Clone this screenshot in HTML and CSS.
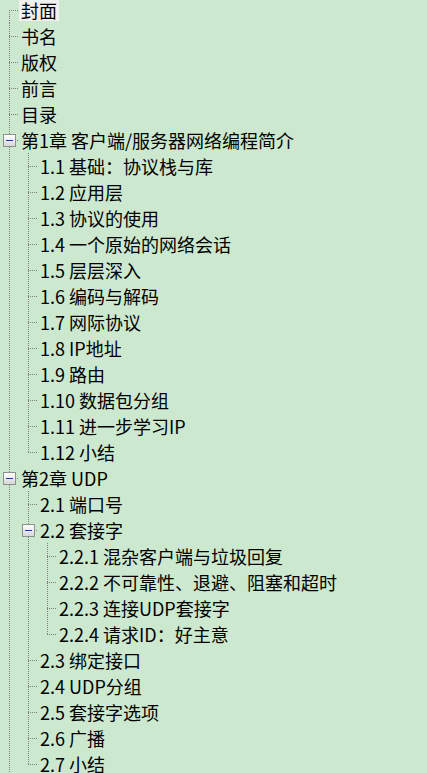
FILE: index.html
```html
<!DOCTYPE html>
<html lang="zh-CN">
<head>
<meta charset="utf-8">
<title>目录树</title>
<link rel="stylesheet" href="styles.css">
</head>
<body>
<div class="tree">
  <div class="row"><span class="c f"></span><span class="lab sel">封面</span></div>
  <div class="row"><span class="c t"></span><span class="lab">书名</span></div>
  <div class="row"><span class="c t"></span><span class="lab">版权</span></div>
  <div class="row"><span class="c t"></span><span class="lab">前言</span></div>
  <div class="row"><span class="c t"></span><span class="lab">目录</span></div>
  <div class="row"><span class="c t"><span class="box"></span></span><span class="lab">第1章 客户端/服务器网络编程简介</span></div>
  <div class="row"><span class="c v"></span><span class="c t"></span><span class="lab">1.1 基础：协议栈与库</span></div>
  <div class="row"><span class="c v"></span><span class="c t"></span><span class="lab">1.2 应用层</span></div>
  <div class="row"><span class="c v"></span><span class="c t"></span><span class="lab">1.3 协议的使用</span></div>
  <div class="row"><span class="c v"></span><span class="c t"></span><span class="lab">1.4 一个原始的网络会话</span></div>
  <div class="row"><span class="c v"></span><span class="c t"></span><span class="lab">1.5 层层深入</span></div>
  <div class="row"><span class="c v"></span><span class="c t"></span><span class="lab">1.6 编码与解码</span></div>
  <div class="row"><span class="c v"></span><span class="c t"></span><span class="lab">1.7 网际协议</span></div>
  <div class="row"><span class="c v"></span><span class="c t"></span><span class="lab">1.8 IP地址</span></div>
  <div class="row"><span class="c v"></span><span class="c t"></span><span class="lab">1.9 路由</span></div>
  <div class="row"><span class="c v"></span><span class="c t"></span><span class="lab">1.10 数据包分组</span></div>
  <div class="row"><span class="c v"></span><span class="c t"></span><span class="lab">1.11 进一步学习IP</span></div>
  <div class="row"><span class="c v"></span><span class="c l"></span><span class="lab">1.12 小结</span></div>
  <div class="row"><span class="c t"><span class="box"></span></span><span class="lab">第2章 UDP</span></div>
  <div class="row"><span class="c v"></span><span class="c t"></span><span class="lab">2.1 端口号</span></div>
  <div class="row"><span class="c v"></span><span class="c t"><span class="box"></span></span><span class="lab">2.2 套接字</span></div>
  <div class="row"><span class="c v"></span><span class="c v"></span><span class="c t"></span><span class="lab">2.2.1 混杂客户端与垃圾回复</span></div>
  <div class="row"><span class="c v"></span><span class="c v"></span><span class="c t"></span><span class="lab">2.2.2 不可靠性、退避、阻塞和超时</span></div>
  <div class="row"><span class="c v"></span><span class="c v"></span><span class="c t"></span><span class="lab">2.2.3 连接UDP套接字</span></div>
  <div class="row"><span class="c v"></span><span class="c v"></span><span class="c l"></span><span class="lab">2.2.4 请求ID：好主意</span></div>
  <div class="row"><span class="c v"></span><span class="c t"></span><span class="lab">2.3 绑定接口</span></div>
  <div class="row"><span class="c v"></span><span class="c t"></span><span class="lab">2.4 UDP分组</span></div>
  <div class="row"><span class="c v"></span><span class="c t"></span><span class="lab">2.5 套接字选项</span></div>
  <div class="row"><span class="c v"></span><span class="c t"></span><span class="lab">2.6 广播</span></div>
  <div class="row"><span class="c v"></span><span class="c l"></span><span class="lab">2.7 小结</span></div>
  <div class="row"><span class="c v"></span></div>
</div>
</body>
</html>
```
FILE: styles.css
```css
html, body {
  margin: 0;
  padding: 0;
  background: #cce8cf;
  overflow: hidden;
}

.tree {
  --vl: repeating-linear-gradient(to bottom, #7f7f7f 0 1px, transparent 1px 2px);
  --hl: repeating-linear-gradient(to right, #7f7f7f 0 1px, transparent 1px 2px);
  margin-top: -3px;
  display: flex;
  flex-direction: column;
}

.row {
  display: flex;
  height: 26px;
}

.c {
  flex: none;
  width: 19px;
  display: flex;
  align-items: center;
}

.v {
  background: var(--vl) 9px 0 / 1px 100% no-repeat;
}

.t {
  background:
    var(--hl) 9px 13px / 10px 1px no-repeat,
    var(--vl) 9px 0 / 1px 100% no-repeat;
}

.l {
  background:
    var(--hl) 9px 13px / 10px 1px no-repeat,
    var(--vl) 9px 0 / 1px 14px no-repeat;
}

.f {
  background:
    var(--hl) 9px 13px / 10px 1px no-repeat,
    var(--vl) 9px 13px / 1px 13px no-repeat;
}

.box {
  width: 11px;
  height: 11px;
  margin-left: 3px;
  border: 1px solid #8e8f8f;
  background: linear-gradient(#ffffff, #d6d6d6);
  display: flex;
  align-items: center;
  justify-content: center;
}

.box::before {
  content: "";
  width: 7px;
  height: 1px;
  background: #1f3d99;
}

.lab {
  align-self: center;
  height: 22px;
  padding: 0 2px;
  font: 18px/22px "Noto Sans CJK SC", "Microsoft YaHei", sans-serif;
  color: #000;
  white-space: nowrap;
}

.sel {
  background: #f0f0f0;
}
```
